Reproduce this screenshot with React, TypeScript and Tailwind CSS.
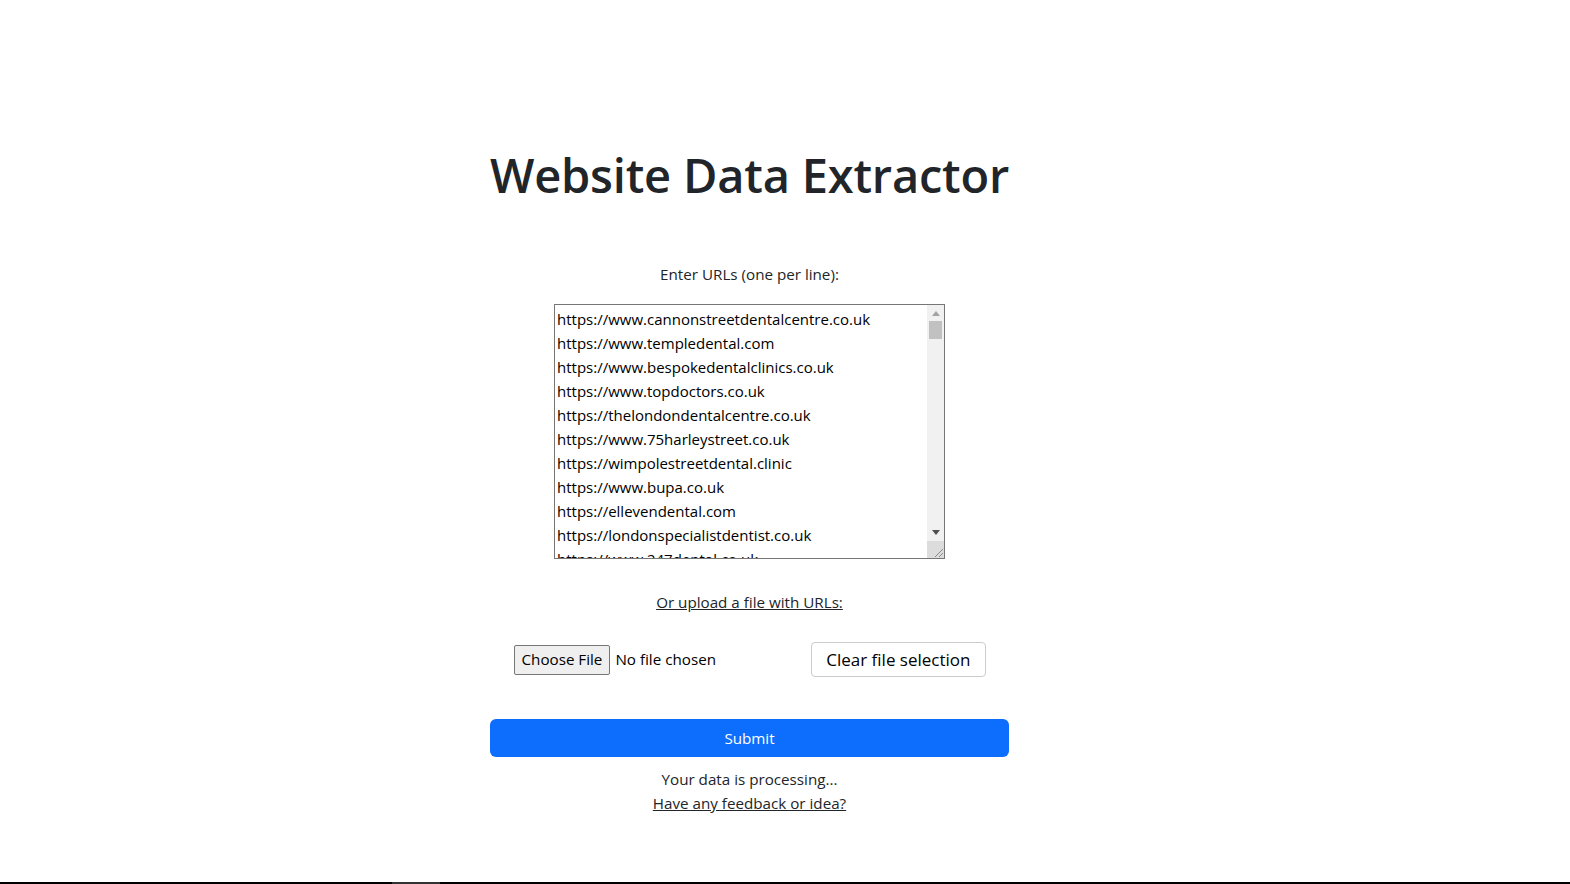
import React from "react";

const urls = [
  "https://www.cannonstreetdentalcentre.co.uk",
  "https://www.templedental.com",
  "https://www.bespokedentalclinics.co.uk",
  "https://www.topdoctors.co.uk",
  "https://thelondondentalcentre.co.uk",
  "https://www.75harleystreet.co.uk",
  "https://wimpolestreetdental.clinic",
  "https://www.bupa.co.uk",
  "https://ellevendental.com",
  "https://londonspecialistdentist.co.uk",
  "https://www.247dental.co.uk",
];

const font = { fontFamily: '"Open Sans", "Noto Sans", sans-serif' };

export default function App() {
  return (
    <div className="relative w-[1570px] h-[884px] bg-white text-[#212529] overflow-hidden" style={font}>
      <div className="ml-[490px] w-[519px] flex flex-col items-center pt-[139px]">
        <h1 className="text-[47px] leading-[72px] font-semibold tracking-[-0.2px] text-[#212529] whitespace-nowrap">Website Data Extractor</h1>
        <div className="mt-[51px] text-[15.2px] leading-6">Enter URLs (one per line):</div>
        <div className="mt-[18px] w-[391px] h-[255px] border border-[#767676] flex bg-white">
          <div className="flex-1 overflow-hidden pt-[2px] pl-[2px] text-[15px] leading-6 text-black whitespace-nowrap">
            {urls.map((u) => (
              <div key={u}>{u}</div>
            ))}
          </div>
          <div className="w-[17px] flex flex-col bg-[#f1f1f1]">
            <div className="h-[16px] flex items-center justify-center">
              <svg width="8" height="5" viewBox="0 0 8 5"><path d="M0 5 L4 0 L8 5 Z" fill="#a3a3a3" /></svg>
            </div>
            <div className="flex-1 px-[2px]">
              <div className="h-[18px] bg-[#c1c1c1]" />
            </div>
            <div className="h-[17px] flex items-center justify-center">
              <svg width="8" height="5" viewBox="0 0 8 5"><path d="M0 0 L4 5 L8 0 Z" fill="#505050" /></svg>
            </div>
            <div className="h-[17px] bg-[#dcdcdc] flex items-end justify-end">
              <svg width="12" height="12" viewBox="0 0 12 12">
                <path d="M11 3 L3 11 M11 7 L7 11" stroke="#8a8a8a" strokeWidth="1" />
              </svg>
            </div>
          </div>
        </div>
        <a href="#" className="mt-[31px] text-[15.2px] leading-6 underline text-[#212529]">Or upload a file with URLs:</a>
        <div className="mt-[28px] w-[472px] flex items-center justify-between">
          <div className="flex items-center">
            <button className="h-[30px] px-[7px] bg-[#efefef] border border-[#767676] rounded-[2px] text-[15.2px] text-black">Choose File</button>
            <span className="ml-[5px] text-[15.2px] text-black">No file chosen</span>
          </div>
          <button className="h-[35px] px-[14px] bg-white border border-[#cccccc] rounded-[4px] text-[17px] text-black">Clear file selection</button>
        </div>
        <button className="mt-[42px] w-[519px] h-[38px] rounded-[6px] bg-[#0d6efd] text-white text-[15.2px]">Submit</button>
        <div className="mt-[10px] text-[15.2px] leading-6">Your data is processing...</div>
        <a href="#" className="text-[15.2px] leading-6 underline text-[#212529]">Have any feedback or idea?</a>
      </div>
      <div className="absolute left-0 bottom-0 w-full h-[2px] bg-black">
        <div className="ml-[392px] w-[48px] h-full bg-[#333333]" />
      </div>
    </div>
  );
}
